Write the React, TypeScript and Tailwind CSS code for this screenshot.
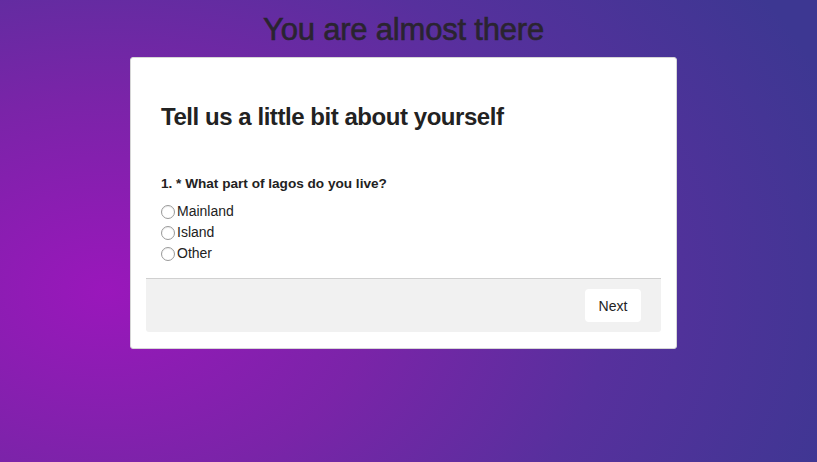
import React from "react";

export default function App() {
  const options = ["Mainland", "Island", "Other"];
  return (
    <div
      className="w-[817px] h-[462px] overflow-hidden bg-[radial-gradient(ellipse_95%_120%_at_13%_63%,#9a17bb_0%,#7a24a8_35%,#57309d_65%,#3d3792_100%)]"
      style={{ fontFamily: '"Liberation Sans", Arial, sans-serif' }}
    >
      <div className="ml-[130px] w-[547px] pt-[12px]">
        <h1 className="text-center text-[31px] leading-[36px] text-[#2a2430] font-normal tracking-[-0.2px] [-webkit-text-stroke:0.6px_#2a2430]">
          You are almost there
        </h1>
        <div className="mt-[9px] bg-white rounded-[3px] border border-[#d6d6d6] px-[15px] pt-[44px] pb-[16px]">
          <h2 className="pl-[15px] text-[24px] leading-[30px] font-bold text-[#222] tracking-[-0.45px]">
            Tell us a little bit about yourself
          </h2>
          <div className="pl-[15px] mt-[44px]">
            <div className="text-[13.6px] leading-[16px] font-bold text-[#222]">
              1. * What part of lagos do you live?
            </div>
            <div className="mt-[9px] flex flex-col">
              {options.map((o) => (
                <label key={o} className="flex items-center h-[21px] text-[14px] text-[#222]">
                  <span className="w-[14px] h-[14px] rounded-full border border-[#9a9a9a] bg-white mr-[2px] shadow-[inset_0_1px_1px_rgba(0,0,0,0.08)]" />
                  {o}
                </label>
              ))}
            </div>
          </div>
          <div className="mt-[14px] border-t border-[#d0d0d0] bg-[#f1f1f1] rounded-b-[3px] h-[54px] flex items-center justify-end pr-[20px]">
            <button className="bg-white rounded-[4px] w-[56px] h-[33px] text-[14px] text-[#222] pt-[1px]">
              Next
            </button>
          </div>
        </div>
      </div>
    </div>
  );
}
